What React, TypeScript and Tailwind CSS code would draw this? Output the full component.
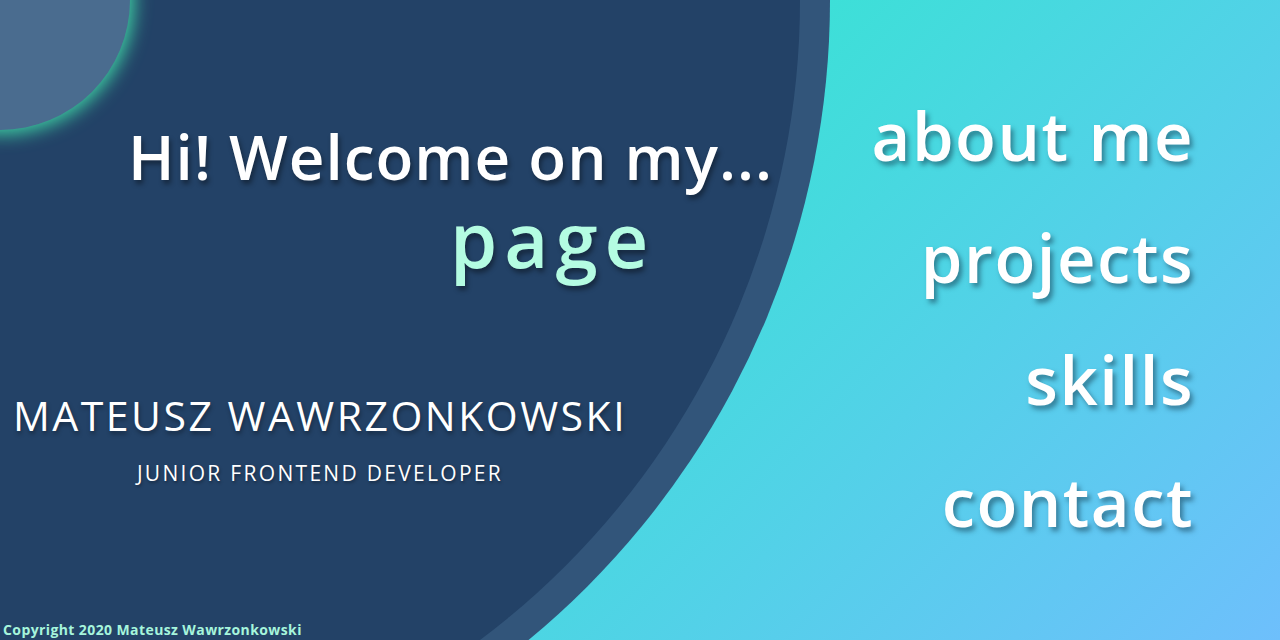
import React from 'react';

const navItems = ['about me', 'projects', 'skills', 'contact'];

const Backdrop = () => {
  return (
    <>
      <div className="absolute left-[-830px] top-[-830px] h-[1660px] w-[1660px] rounded-full bg-[#32557a]"></div>
      <div className="absolute left-[-800px] top-[-800px] h-[1600px] w-[1600px] rounded-full bg-[#234267]"></div>
      <div className="absolute left-[-130px] top-[-130px] h-[260px] w-[260px] rounded-full bg-[#4a6c8f] shadow-[0_0_18px_4px_#3fd3a4]"></div>
    </>
  );
};

const Nav = () => {
  return (
    <nav className="flex flex-col items-end gap-[48px] pr-[86px] pt-[98px]">
      {navItems.map((item) => (
        <a
          key={item}
          href="#"
          className="text-[67px] leading-[74px] font-semibold tracking-[1.5px] text-white [text-shadow:3px_4px_5px_rgba(20,60,80,0.55)]"
        >
          {item}
        </a>
      ))}
    </nav>
  );
};

export default function App() {
  return (
    <div className="relative h-[640px] w-full overflow-hidden bg-[linear-gradient(135deg,#2deacc_25%,#6ebffc_100%)] font-['Open_Sans',sans-serif]">
      <Backdrop />
      <div className="relative z-10 flex h-full justify-between">
        <div className="flex h-full w-[800px] flex-col">
          <h1 className="pl-[128px] pt-[125px] text-[62px] leading-[62px] font-semibold tracking-[1px] text-white [text-shadow:2px_4px_5px_rgba(0,0,0,0.4)]">
            Hi! Welcome on my...
          </h1>
          <p className="pl-[450px] pt-[12px] text-[76px] leading-[80px] font-semibold tracking-[7px] text-[#b4fce2] [text-shadow:2px_4px_5px_rgba(0,0,0,0.4)]">
            page
          </p>
          <div className="mt-[112px] flex w-[640px] flex-col items-center">
            <h2 className="text-[41px] leading-[48px] font-normal tracking-[2.5px] text-white [text-shadow:1px_3px_4px_rgba(0,0,0,0.35)]">
              MATEUSZ WAWRZONKOWSKI
            </h2>
            <p className="mt-[20px] text-[21px] leading-[28px] font-medium tracking-[2.3px] text-white [text-shadow:1px_2px_3px_rgba(0,0,0,0.35)]">
              JUNIOR FRONTEND DEVELOPER
            </p>
          </div>
          <footer className="mt-auto pb-[1px] pl-[3px] text-[14px] leading-[18px] font-bold tracking-[0.4px] text-[#a6f5dc]">
            Copyright 2020 Mateusz Wawrzonkowski
          </footer>
        </div>
        <Nav />
      </div>
    </div>
  );
}
